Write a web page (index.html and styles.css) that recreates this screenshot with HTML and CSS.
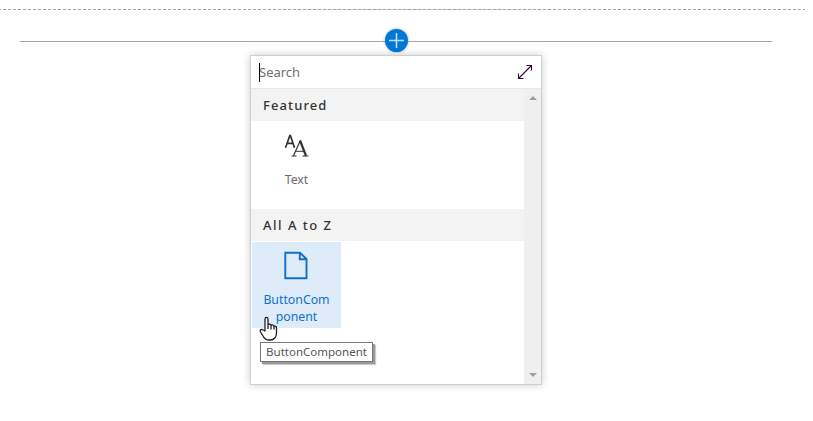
FILE: index.html
```html
<!DOCTYPE html>
<html lang="en">
<head>
<meta charset="utf-8">
<title>Add a web part</title>
<link rel="stylesheet" href="styles.css">
</head>
<body>
<main class="canvas">
  <div class="zone-edge"></div>
  <div class="insert-row">
    <span class="rule"></span>
    <button class="add" aria-label="Add"><svg width="23" height="23" viewBox="0 0 23 23"><path d="M11.5 4v15M4 11.5h15" stroke="#c5e2f8" stroke-width="1.600"/></svg></button>
    <span class="rule"></span>
  </div>
  <section class="picker">
    <header class="search">
      <span class="caret"></span><span class="placeholder">Search</span>
      <svg class="expand" width="16" height="16" viewBox="0 0 16 16"><path d="M2 14L14 2M9.500 1.500h5v5M1.500 9.500v5h5" fill="none" stroke="#2b0a35" stroke-width="1.100"/></svg>
    </header>
    <div class="body">
      <div class="groups">
        <h2>Featured</h2>
        <div class="items">
          <div class="item">
            <svg class="icon" width="28" height="30" viewBox="0 -.8 28 30" fill="none" stroke="#333"><path d="M3.500 17L7.800 4.800h.6L12.500 17M5 12.500h6" stroke-width="1.700"/><path d="M11.500 25L18 10.500" stroke-width="1.200"/><path d="M18 9.500L24 25" stroke-width="2.300"/><path d="M13.500 20.500h8.500M9.500 25.200h5M20.500 25.200h6" stroke-width="1"/></svg>
            <span>Text</span>
          </div>
        </div>
        <h2 class="wide">All A to Z</h2>
        <div class="items">
          <div class="item selected">
            <svg class="icon" width="28" height="30" viewBox="0 0 28 30" fill="none" stroke="#1071c5" stroke-width="1.900"><path d="M3.300 2.800H18L24.500 9V28.200H3.300ZM17.800 2.800V9.200H24.500"/></svg>
            <span>ButtonCom<br>ponent</span>
          </div>
        </div>
      </div>
      <div class="scrollbar"><i class="up"></i><i class="down"></i></div>
    </div>
    <div class="tooltip">ButtonComponent</div>
    <svg class="pointer" width="20" height="26" viewBox="0 0 20 26"><path d="M6 15V3.200C6 .8 9 .8 9 3.200V9C9.500 7.600 12 8 12 9.500C12.800 8.500 15 9 15 10.500C16 9.800 17.500 10.500 17.500 12V17C17.500 21 15 24 11.500 24H9.500C7 24 5 22 3.700 19.500L1.500 16C.4 13.800 2.800 12.500 4.200 14ZM9 8.500V13M12 9.500V13.500M15 10.500V13.500" fill="#fff" stroke="#1c1c24" stroke-width="1.300" stroke-linejoin="round"/></svg>
  </section>
</main>
</body>
</html>
```
FILE: styles.css
```css
* { box-sizing: border-box; }
body { margin: 0; background: #fff; font-family: "Noto Sans", sans-serif; overflow: hidden; }
.canvas { display: flow-root; width: 813px; height: 421px; }
.zone-edge {
  width: 805px;
  height: 1px;
  margin-top: 9px;
  background:
    repeating-linear-gradient(90deg, #a6a6a6 0 1px, transparent 1px 3px, #a6a6a6 3px 5px),
    linear-gradient(90deg, transparent 30%, #cfcfcf 45% 60%, transparent 75%);
}
.insert-row { display: flex; align-items: center; width: 752px; height: 24px; margin: 18px 0 0 20px; }
.rule { flex: 1; height: 1px; margin-top: 2px; background: #a6a6a6; }
.add { display: flex; width: 23px; height: 23px; padding: 0; border: 0; border-radius: 50%; background: #0078d7; box-shadow: 0 0 3px rgba(0,0,0,.35); }
.picker { position: relative; width: 292px; height: 330px; margin: 3px 0 0 250px; border: 1px solid #cfcfcf; background: #fff; box-shadow: 0 0 8px rgba(0,0,0,.2); }
.search { display: flex; align-items: center; height: 33px; padding: 0 8px; border-bottom: 1px solid #e8e8e8; font-size: 13px; color: #707070; }
.caret { width: 1px; height: 19px; background: #000; }
.placeholder { margin-left: -1px; }
.expand { margin-left: auto; }
.body { display: flex; height: 295px; }
.groups { flex: 1; }
h2 { height: 32px; margin: 0; padding-left: 12px; background: #f3f3f3; color: #333; font-size: 13px; font-weight: 500; line-height: 32px; letter-spacing: 1.1px; }
.wide { letter-spacing: 1.500px; }
.items { height: 88px; padding: 1px; }
.item { display: flex; flex-direction: column; align-items: center; width: 89px; height: 86px; padding-top: 8px; color: #6b6b6b; font-size: 12.300px; line-height: 17px; text-align: center; }
.icon { margin: 0 2px 11px 0; }
.selected { background: #deecf9; color: #1071c5; }
.scrollbar { display: flex; flex-direction: column; justify-content: space-between; align-items: center; width: 17px; padding: 7px 0; background: #f0f0f0; }
.up, .down { border: 4px solid transparent; border-top: 0; border-bottom: 4px solid #a0a0a0; }
.down { border-bottom: 0; border-top: 4px solid #a0a0a0; }
.tooltip { position: absolute; left: 9px; top: 286px; width: 113px; height: 20px; border: 1px solid #767676; background: #fff; color: #575757; font-size: 11.500px; line-height: 18px; text-align: center; box-shadow: 2px 2px 0 #999, 3px 3px 1px #ccc; }
.pointer { position: absolute; left: 8px; top: 260px; }
```
